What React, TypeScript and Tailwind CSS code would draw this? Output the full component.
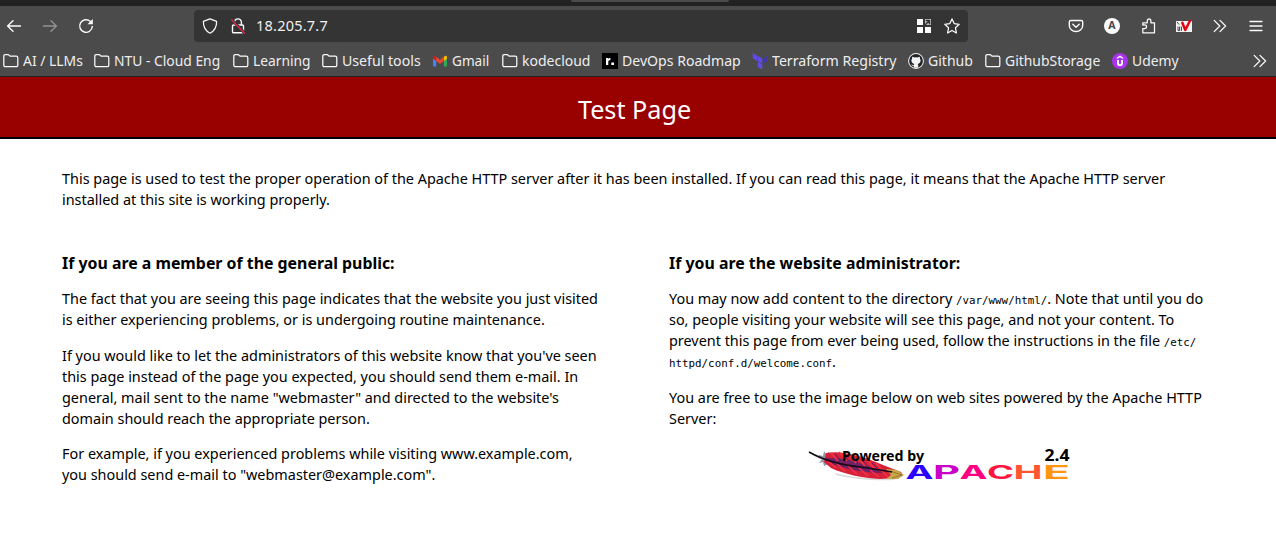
import React from "react";

type IconProps = { children: React.ReactNode; className?: string };

function Icon({ children, className = "" }: IconProps) {
  return (
    <svg
      viewBox="0 0 16 16"
      className={`h-4 w-4 shrink-0 ${className}`}
      fill="none"
      stroke="#fbfbfe"
      strokeWidth="1.25"
      strokeLinecap="round"
      strokeLinejoin="round"
    >
      {children}
    </svg>
  );
}

const Folder = () => (
  <Icon>
    <path d="M.8 12.200V3a1.400 1.400 0 0 1 1.400-1.400h3.200l1.800 1.600h6a1.600 1.600 0 0 1 1.600 1.600v7.400a1.400 1.400 0 0 1-1.400 1.400H2.200a1.400 1.400 0 0 1-1.400-1.400z" />
  </Icon>
);

const Gmail = () => (
  <Icon>
    <g stroke="none">
      <path d="M1 5v7.400c0 .6.4 1.100 1 1.100h2.200V7.200z" fill="#4285f4" />
      <path d="M15 5v7.400c0 .6-.4 1.100-1 1.100h-2.200V7.200z" fill="#34a853" />
      <path d="M11.800 3.800v4.300L15 5.700V4.200c0-1.600-1.500-2-2.500-1z" fill="#fbbc04" />
      <path d="M1 4.200v1.500l3.200 2.400V3.800l-.7-.6C2.500 2.200 1 2.600 1 4.200z" fill="#c5221f" />
      <path d="M4.200 3.800v4.300L8 11l3.800-2.900V3.800L8 6.700z" fill="#ea4335" />
    </g>
  </Icon>
);

const Roadmap = () => (
  <Icon>
    <path d="M0 0h16v16H0z" fill="#000" stroke="none" />
    <path d="M4 12V5h2v.8c.5-.7 1.200-.9 2.400-.8v2.200C6.800 7 6.300 7.500 6.300 9v3zM9.300 9.500H12V12H9.300z" fill="#fff" stroke="none" />
  </Icon>
);

const Terraform = () => (
  <Icon>
    <g stroke="none">
      <path d="M.7 0l4.600 2.700v5.200L.7 5.200zM5.800 3l4.500 2.600v5.200L5.800 8.200zM5.800 8.800l4.500 2.600v5.100l-4.500-2.600z" fill="#5f4be8" />
      <path d="M10.900 5.600L15.400 3v5.200l-4.500 2.600z" fill="#4338a8" />
    </g>
  </Icon>
);

const Github = () => (
  <Icon>
    <circle cx="8" cy="8" r="7.900" fill="#f4f4f4" stroke="none" />
    <circle cx="8" cy="8" r="6.900" fill="#20252a" stroke="none" />
    <path
      d="M5.800 14.800v-2c-1.500.3-2-.5-2.500-1.400.9-.1 1.300.9 2.500.5.1-.5.3-.8.6-1-1.900-.3-3-1.200-3-3.300 0-.8.3-1.500.7-2-.1-.6 0-1.200.2-1.800.8 0 1.400.4 1.900.8a7 7 0 0 1 3.600 0c.5-.4 1.100-.8 1.900-.8.2.6.3 1.200.2 1.800.4.500.7 1.200.7 2 0 2.100-1.100 3-3 3.300.4.300.6.800.6 1.500v2.400z"
      fill="#f4f4f4"
      stroke="none"
    />
  </Icon>
);

const Udemy = () => (
  <Icon>
    <circle cx="8" cy="8" r="8" fill="#a932eb" stroke="none" />
    <path d="M5.400 5L8 3.300 10.600 5" stroke="#fff" strokeWidth="1.400" />
    <path d="M6 7v3.200c0 2.600 4 2.600 4 0V7" stroke="#fff" strokeWidth="1.900" strokeLinecap="butt" />
  </Icon>
);

const Chevrons = () => (
  <Icon>
    <path d="M2.200 2.400L7.800 8l-5.600 5.600M8 2.400L13.600 8 8 13.600" />
  </Icon>
);

const bookmarks = [
  { label: "AI / LLMs", icon: <Folder />, item: "w-[91px]", text: "w-[60px]", length: 59.5 },
  { label: "NTU - Cloud Eng", icon: <Folder />, item: "w-[139px]", text: "w-[108px]", length: 106 },
  { label: "Learning", icon: <Folder />, item: "w-[89px]", text: "w-[58px]", length: 57 },
  { label: "Useful tools", icon: <Folder />, item: "w-[110px]", text: "w-[80px]", length: 79 },
  { label: "Gmail", icon: <Gmail />, item: "w-[70px]", text: "w-[38px]", length: 37.5 },
  { label: "kodecloud", icon: <Folder />, item: "w-[100px]", text: "w-[69px]", length: 68.5 },
  { label: "DevOps Roadmap", icon: <Roadmap />, item: "w-[150px]", text: "w-[119px]", length: 118.5 },
  { label: "Terraform Registry", icon: <Terraform />, item: "w-[156px]", text: "w-[126px]", length: 125 },
  { label: "Github", icon: <Github />, item: "w-[77px]", text: "w-[45px]", length: 44.5 },
  { label: "GithubStorage", icon: <Folder />, item: "w-[127px]", text: "w-[95px]", length: 95 },
  { label: "Udemy", icon: <Udemy />, item: "w-[80px]", text: "w-[48px]", length: 47 },
];

/* Shrinks the label horizontally so that it takes exactly its column. */
function BookmarkLabel({ label, length }: { label: string; length: number }) {
  const ref = React.useRef<HTMLSpanElement>(null);
  const [scale, setScale] = React.useState(1);
  React.useLayoutEffect(() => {
    if (ref.current) setScale(length / ref.current.offsetWidth);
  }, [length]);
  return (
    <span
      ref={ref}
      className="block w-max origin-left whitespace-nowrap"
      style={{ transform: `scaleX(${scale})` }}
    >
      {label}
    </span>
  );
}

function NavigationBar() {
  return (
    <div className="flex h-[40px] items-center">
      <div className="flex w-[194px] items-center gap-5 pl-[6px]">
        <Icon>
          <path d="M14.500 8H1.500M7 2.800L1.600 8 7 13.200" strokeWidth="1.400" />
        </Icon>
        <Icon className="opacity-40">
          <path d="M1.500 8h13M9 2.800L14.400 8 9 13.200" strokeWidth="1.400" />
        </Icon>
        <Icon>
          <path d="M14.300 8.500A6.300 6.300 0 1 1 12.200 3.300L13.500 4.500" strokeWidth="1.400" />
          <path d="M14.800 1v5.300H9.500z" fill="#fbfbfe" stroke="none" />
        </Icon>
      </div>
      <div className="flex h-8 w-[774px] items-center rounded bg-[#343434] px-2">
        <Icon>
          <path d="M8 .8l6.600 2.500c.2 5.500-1.500 9.300-6.600 11.900C2.900 12.600 1.200 8.800 1.400 3.300z" />
        </Icon>
        <Icon className="ml-3">
          <path d="M4.600 6.500V4.200C4.600-.3 11.400-.3 11.400 4.200v2.300M3.500 7h9a1 1 0 0 1 1 1v5.800a1 1 0 0 1-1 1h-9a1 1 0 0 1-1-1V8a1 1 0 0 1 1-1z" strokeWidth="1.400" />
          <path d="M1.800 1.800l12.800 13.300" stroke="#343434" strokeWidth="3" />
          <path d="M1.500 1.600l13 13.600" stroke="#e22850" strokeWidth="1.300" />
        </Icon>
        <span className="ml-[10px] pb-[2px] text-[14.500px] leading-5 tracking-[0.22px] text-[#f0f0f2]">18.205.7.7</span>
        <Icon className="ml-auto">
          <path d="M1 1h6v6H1zM1 9h6v6H1zM9 9h6v6H9z" fill="#fbfbfe" stroke="none" />
          <path d="M9 1h6v6H9z" fill="#bdbdbd" stroke="none" />
          <path d="M9.500 6.500l3.700-3.700M10.300 2.500h3.200v3.200" stroke="#343434" strokeWidth="1.400" />
        </Icon>
        <Icon className="ml-3">
          <path d="M8 .9l2.200 4.700 5 .7-3.700 3.500.9 5.200L8 12.500 3.600 15l.9-5.200L.8 6.300l5-.7z" />
        </Icon>
      </div>
      <div className="ml-auto flex items-center gap-5 pr-[12px]">
        <Icon>
          <path d="M2.800 2.500h10.400c.9 0 1.500.6 1.500 1.500v3.200c0 3.800-3 6.300-6.700 6.300S1.300 11 1.300 7.200V4c0-.9.6-1.500 1.500-1.500zM4.800 6.300L8 9.300l3.200-3" strokeWidth="1.400" />
        </Icon>
        <div className="flex h-4 w-4 items-center justify-center rounded-full bg-[#fbfbfe] pb-px text-[10.500px] leading-none font-bold text-[#444]">
          A
        </div>
        <Icon>
          <path d="M2.800 14.800v-4.200h1.700c2.700 0 2.700-3.600 0-3.600H2.800V4.800h4.500V3c0-2.900 3.600-2.900 3.600 0v1.800h3.600v10z" />
        </Icon>
        <Icon>
          <path d="M0 3h16v11H0z" fill="#f2f2f2" stroke="none" />
          <path d="M1.200 4.200l1.600 2M2 9v3.500h1.600V9M5.400 9v3.500" stroke="#444" strokeWidth="1" />
          <path d="M6.300 4.800l3 7.200L14 2.800" stroke="#df0610" strokeWidth="2.500" />
        </Icon>
        <Chevrons />
        <Icon>
          <path d="M2 3.500h12M2 8h12M2 12.500h12" strokeWidth="1.300" />
        </Icon>
      </div>
    </div>
  );
}

function BookmarksBar() {
  return (
    <div className="flex h-[30px] items-center pr-2 pl-[3px] text-[14.500px] leading-5 text-[#ededf0]">
      {bookmarks.map(({ label, icon, item, text, length }) => (
        <div key={label} className={`flex shrink-0 items-center gap-[3.500px] ${item}`}>
          {icon}
          <span className={`block shrink-0 pb-[2px] ${text}`}>
            <BookmarkLabel label={label} length={length} />
          </span>
        </div>
      ))}
      <div className="ml-auto">
        <Chevrons />
      </div>
    </div>
  );
}

function Feather() {
  return (
    <>
      <path d="M27 24c20 5 42 6 63 5l-4 2c-20 1-42-1-58-5z" fill="#ddd" />
      <path d="M11 6l4 1 1-5 2 3 3-2 2 5-3 4 2 3-4 1-2 1-1-4-4 1 3-4-4-1z" fill="#8e99a3" />
      <path d="M18 4c14-3 35 2 57 12l18 7 2 3-6 3-17 1c-17-1-37-5-49-11l-7-6z" fill="#d92039" />
      <path d="M17 9c19-1 38 5 59 15-19 0-42-4-56-11z" fill="#712266" />
      <path
        d="M23 4l7 8M31 3l8 9M40 5l8 9M49 8l8 9M59 11l7 8M68 14l6 7M19 11l9 8M27 13l10 9M38 15l11 10M50 18l10 9M62 21l9 7M74 22l6 6"
        stroke="#f33449"
        strokeWidth="1.400"
      />
      <path d="M27 5l6 7M36 6l6 7M45 8l6 7M54 11l6 7M64 14l6 6" stroke="#52256d" strokeWidth="1" />
      <path d="M78 20l11 1 7 5-6 4H78l5-4z" fill="#caa64b" />
      <path d="M82 22l12 4-10 3" stroke="#806127" fill="none" strokeWidth=".7" />
      <path d="M1 3c17 10 38 14 59 16l24 4" fill="none" stroke="#160b16" strokeWidth="1.500" />
      <path d="M0 2l13 7-3-2z" fill="#160b16" />
    </>
  );
}

const apacheLetters = [
  { letter: "A", x: 97.5, width: 28, color: "#2a00ff" },
  { letter: "P", x: 125, width: 27, color: "#c900c8" },
  { letter: "A", x: 151.5, width: 28, color: "#ff0082" },
  { letter: "C", x: 179, width: 27, color: "#ff163f" },
  { letter: "H", x: 205.5, width: 29, color: "#ff5530" },
  { letter: "E", x: 235, width: 27, color: "#ff960d" },
];

function ApacheLogo() {
  return (
    <svg className="block h-[42px] w-[270px]" viewBox="0 -6 270 42" fontFamily="Noto Sans, sans-serif">
      <Feather />
      <text x="34" y="11.500" fontSize="14.500" fontWeight="700" textLength="82" lengthAdjust="spacingAndGlyphs">
        Powered by
      </text>
      <text x="236.500" y="11.500" fontSize="15.500" fontWeight="700" textLength="25" lengthAdjust="spacingAndGlyphs">
        2.4
      </text>
      {apacheLetters.map(({ letter, x, width, color }) => (
        <text
          key={x}
          x={x}
          y="30"
          fontFamily="Inter, sans-serif"
          fontSize="18.500"
          fontWeight="700"
          textLength={width}
          lengthAdjust="spacingAndGlyphs"
          fill={color}
        >
          {letter}
        </text>
      ))}
    </svg>
  );
}

const code = "font-['DejaVu_Sans_Mono',monospace] text-[10.83px] leading-[0px]";

export default function App() {
  return (
    <div className="h-[536px] overflow-hidden bg-white font-['Noto_Sans',sans-serif] text-[14.415px] leading-[21px] text-black">
      <div className="h-[77px] border-b border-[#202020] bg-[#4b4b4b] text-[#fbfbfe]">
        <div className="flex h-[6px] bg-[#222222] pl-[571px]">
          <div className="h-[2px] w-[158px] rounded-b bg-[#4b4b4b]" />
        </div>
        <NavigationBar />
        <BookmarksBar />
      </div>
      <header className="flex h-[62px] items-center justify-center border-b-2 border-black bg-[#990000] pt-[3px] pr-[7px]">
        <h1 className="text-[25.2px] leading-9 text-white">Test Page</h1>
      </header>
      <main className="px-[62px] pt-[29px]">
        <p className="whitespace-nowrap">
          This page is used to test the proper operation of the Apache HTTP server after it has been installed. If you can read this page, it means that the Apache HTTP server
          <br />
          installed at this site is working properly.
        </p>
        <div className="mt-[42px] flex whitespace-nowrap">
          <section className="flex w-[607px] flex-col gap-[14.400px]">
            <h2 className="text-[15.880px] leading-[22px] font-bold">If you are a member of the general public:</h2>
            <p>
              The fact that you are seeing this page indicates that the website you just visited
              <br />
              is either experiencing problems, or is undergoing routine maintenance.
            </p>
            <p>
              If you would like to let the administrators of this website know that you've seen
              <br />
              this page instead of the page you expected, you should send them e-mail. In
              <br />
              general, mail sent to the name "webmaster" and directed to the website's
              <br />
              domain should reach the appropriate person.
            </p>
            <p>
              For example, if you experienced problems while visiting www.example.com,
              <br />
              you should send e-mail to "webmaster@example.com".
            </p>
          </section>
          <section className="flex flex-col gap-[14.400px]">
            <h2 className="text-[15.880px] leading-[22px] font-bold">If you are the website administrator:</h2>
            <p>
              You may now add content to the directory <code className={code}>/var/www/html/</code>. Note that until you do
              <br />
              so, people visiting your website will see this page, and not your content. To
              <br />
              prevent this page from ever being used, follow the instructions in the file <code className={code}>/etc/</code>
              <br />
              <code className={code}>httpd/conf.d/welcome.conf</code>.
            </p>
            <p>
              You are free to use the image below on web sites powered by the Apache HTTP
              <br />
              Server:
            </p>
            <div className="pl-[139px]">
              <ApacheLogo />
            </div>
          </section>
        </div>
      </main>
    </div>
  );
}
